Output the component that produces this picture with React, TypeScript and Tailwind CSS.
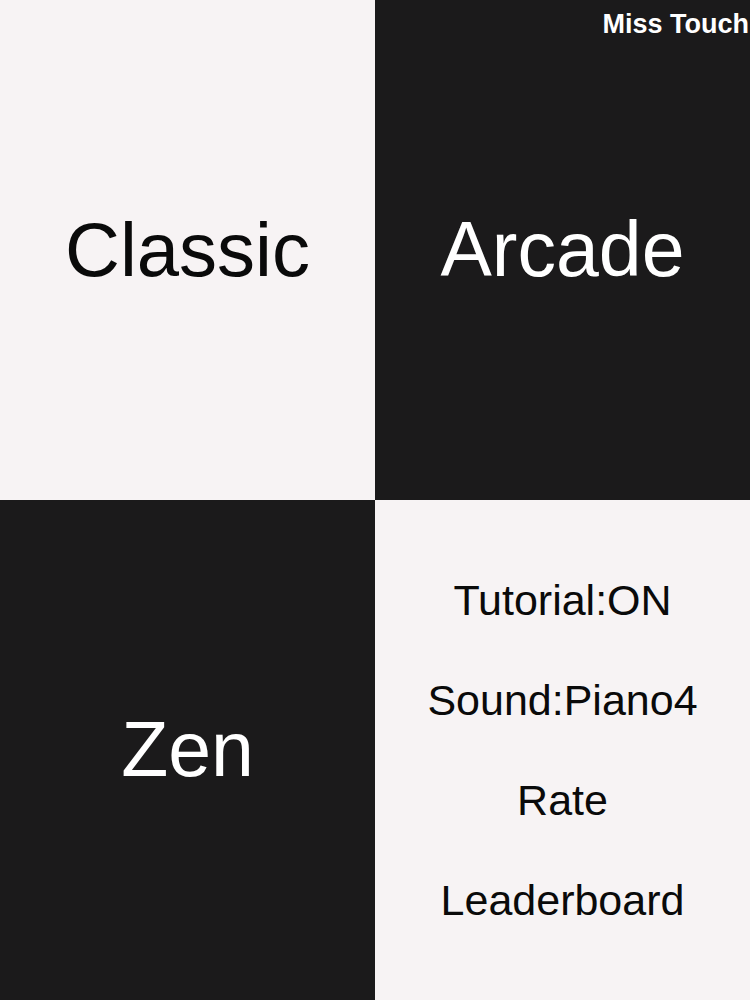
export default function App() {
  const menu = ["Tutorial:ON", "Sound:Piano4", "Rate", "Leaderboard"];

  return (
    <div className="relative grid w-[750px] grid-cols-2 font-['Liberation_Sans',Arial,sans-serif]">
      <div className="flex h-[500px] items-center justify-center bg-[#f7f3f4] text-[76px] text-[#0a0a0a]">
        Classic
      </div>
      <div className="flex h-[500px] items-center justify-center bg-[#1b1a1b] text-[77px] text-white">
        Arcade
      </div>
      <div className="flex h-[500px] items-center justify-center bg-[#1b1a1b] text-[77px] text-white">
        Zen
      </div>
      <div className="flex h-[500px] flex-col items-center justify-center bg-[#f7f3f4] text-[43px] text-[#0a0a0a]">
        {menu.map((m) => (
          <div key={m} className="flex h-[100px] items-center">
            {m}
          </div>
        ))}
      </div>

      <div className="absolute right-[1px] top-[4px] text-[27px] font-bold text-white">
        Miss Touch
      </div>
    </div>
  );
}
